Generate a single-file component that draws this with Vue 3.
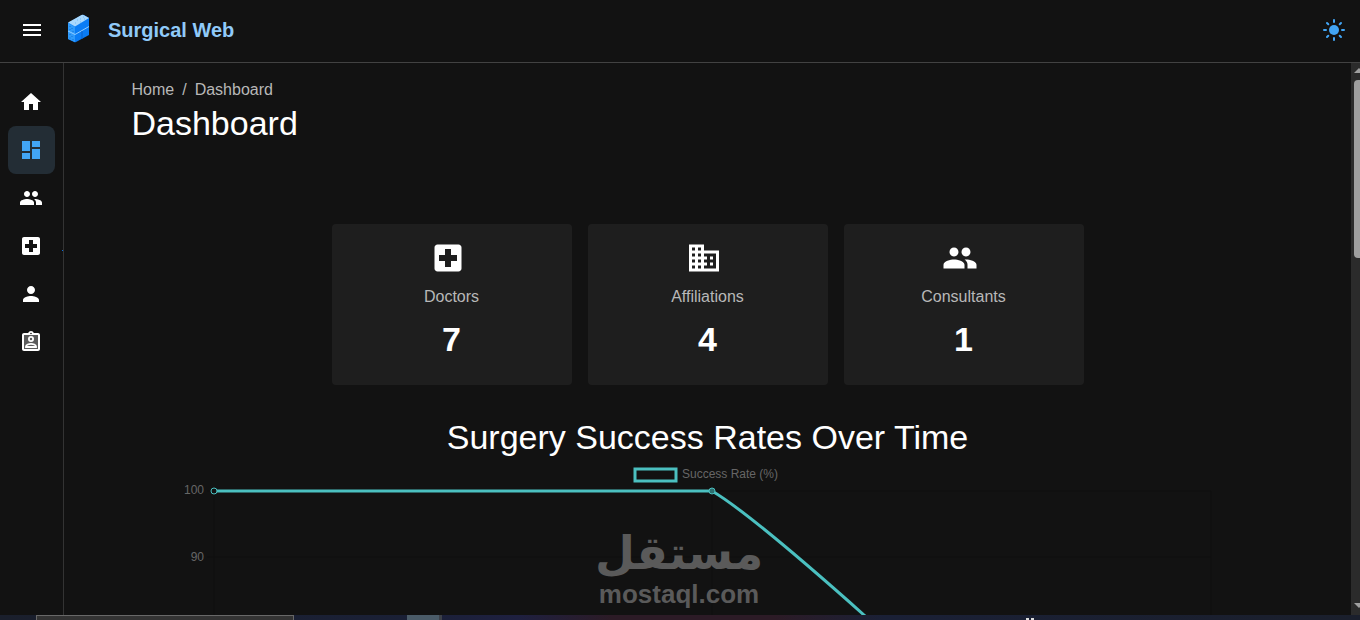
<script setup>
const paths = {
  home: 'M10 20v-6h4v6h5v-8h3L12 3 2 12h3v8z',
  dashboard: 'M3 13h8V3H3v10zm0 8h8v-6H3v6zm10 0h8V11h-8v10zm0-18v6h8V3h-8z',
  people: 'M16 11c1.66 0 2.99-1.34 2.99-3S17.66 5 16 5s-3 1.34-3 3 1.34 3 3 3zm-8 0c1.66 0 2.99-1.34 2.99-3S9.66 5 8 5 5 6.34 5 8s1.34 3 3 3zm0 2c-2.33 0-7 1.17-7 3.5V19h14v-2.5c0-2.33-4.67-3.5-7-3.5zm8 0c-.29 0-.62.02-.97.05 1.16.84 1.97 1.97 1.97 3.45V19h6v-2.5c0-2.33-4.67-3.5-7-3.5z',
  hospital: 'M19 3H5c-1.1 0-1.99.9-1.99 2L3 19c0 1.1.9 2 2 2h14c1.1 0 2-.9 2-2V5c0-1.1-.9-2-2-2zm-1 11h-4v4h-4v-4H6v-4h4V6h4v4h4v4z',
  person: 'M12 12c2.21 0 4-1.79 4-4s-1.79-4-4-4-4 1.79-4 4 1.79 4 4 4zm0 2c-2.67 0-8 1.34-8 4v2h16v-2c0-2.66-5.33-4-8-4z',
  business: 'M12 7V3H2v18h20V7H12zM6 19H4v-2h2v2zm0-4H4v-2h2v2zm0-4H4V9h2v2zm0-4H4V5h2v2zm4 12H8v-2h2v2zm0-4H8v-2h2v2zm0-4H8V9h2v2zm0-4H8V5h2v2zm10 12h-8v-2h2v-2h-2v-2h2v-2h-2V9h8v10zm-2-8h-2v2h2v-2zm0 4h-2v2h2v-2z',
}

const nav = [
  { label: 'Home', icon: 'home' },
  { label: 'Dashboard', icon: 'dashboard', active: true },
  { label: 'Consultants', icon: 'people' },
  { label: 'Doctors', icon: 'hospital' },
  { label: 'Patients', icon: 'person' },
  { label: 'Assignments', icon: 'badge' },
]

const stats = [
  { label: 'Doctors', value: 7, icon: 'hospital' },
  { label: 'Affiliations', value: 4, icon: 'business' },
  { label: 'Consultants', value: 1, icon: 'people' },
]
</script>

<template>
  <div class="screen">
    <header class="topbar">
      <button class="icon-btn" type="button" aria-label="Toggle menu">
        <svg viewBox="0 0 24 24" width="24" height="24"><path fill="currentColor" d="M3 18h18v-2H3v2zm0-5h18v-2H3v2zm0-7v2h18V6H3z" /></svg>
      </button>
      <a class="brand" href="#">
        <svg class="logo" viewBox="0 0 24 30" width="24" height="30">
          <path d="M1 9L15 1q1-.5 2 0l5 3v17L9 28q-1 .5-2 0l-6-3z" fill="#0a7cf5" />
          <path d="M1 9l7 4v15l-7-3z" fill="#2f9bfb" />
          <path d="M1 8.500L14.500 1q1-.5 2 0L22 4 8 12.500z" fill="#a9d8fd" />
          <path d="M1 17l7 3.500L22 12.500" fill="none" stroke="#8fcbff" stroke-width="1" />
          <path d="M15 17v8" stroke="#0960c8" stroke-width="1" />
          <path d="M3 12v1M5 14v1M3 15v1M6 17v1M3 20v1M5 22v1M3 23.500v1M6 25v1" stroke="#1271d6" stroke-width="1" />
          <path d="M10 6h1M13 5h1M16 3h1M13 8h1M17 5h1M8 9h1" stroke="#6db8f7" stroke-width="1" />
        </svg>
        <span>Surgical Web</span>
      </a>
      <button class="icon-btn theme" type="button" aria-label="Toggle theme">
        <svg viewBox="0 0 24 24" width="24" height="24">
          <circle cx="12" cy="12" r="5" fill="currentColor" />
          <path d="M12 2v2M12 20v2M2 12h2M20 12h2M5 5l1.300 1.300M17.700 17.700L19 19M5 19l1.300-1.300M17.700 6.300L19 5" fill="none" stroke="currentColor" stroke-width="2" stroke-linecap="round" />
        </svg>
      </button>
    </header>

    <div class="body">
      <nav class="sidebar" aria-label="Main">
        <a v-for="item in nav" :key="item.label" href="#" class="nav-item" :class="{ active: item.active }" :aria-label="item.label">
          <svg viewBox="0 0 24 24" width="24" height="24">
            <g v-if="item.icon === 'badge'">
              <path d="M5 5h14v14H5z" fill="#5b5b5b" />
              <path fill="currentColor" fill-rule="evenodd" d="M19 3h-4.200C14.400 1.800 13.300 1 12 1s-2.400.8-2.800 2H5c-1.100 0-2 .9-2 2v14c0 1.100.9 2 2 2h14c1.100 0 2-.9 2-2V5c0-1.100-.9-2-2-2zm-7-.3a.8.8 0 1 1 0 1.600.8.8 0 0 1 0-1.600zM19 19H5V5h14z" />
              <circle cx="12" cy="9" r="2.100" fill="none" stroke="currentColor" stroke-width="1.800" />
              <path d="M7 16.500c0-1.700 3-2.700 5-2.700s5 1 5 2.700V17H7z" fill="none" stroke="currentColor" stroke-width="1.800" />
            </g>
            <path v-else fill="currentColor" :d="paths[item.icon]" />
          </svg>
        </a>
        <i class="tick"></i>
      </nav>

      <main class="main">
        <div class="container">
          <nav class="crumbs" aria-label="Breadcrumb">
            <a href="#">Home</a><span>/</span><a href="#">Dashboard</a>
          </nav>
          <h1>Dashboard</h1>

          <section class="cards">
            <article v-for="s in stats" :key="s.label" class="card">
              <svg viewBox="0 0 24 24" width="36" height="36"><path fill="currentColor" :d="paths[s.icon]" /></svg>
              <p class="label">{{ s.label }}</p>
              <p class="value">{{ s.value }}</p>
            </article>
          </section>

          <h2>Surgery Success Rates Over Time</h2>
          <svg class="chart" viewBox="0 0 1152 240" role="img" aria-label="Success rate over time">
            <path d="M75 33H1079M75 99H1079M82 33V240M580 33V240M1079 33V240" stroke="#0e0e0e" fill="none" />
            <rect x="503" y="11" width="41" height="12" fill="none" stroke="#4bc0c0" stroke-width="3" />
            <g class="axis">
              <text x="550" y="20">Success Rate (%)</text>
              <text x="72" y="36" text-anchor="end">100</text>
              <text x="72" y="103" text-anchor="end">90</text>
            </g>
            <path d="M82 33H580C609 50 659 92 732 157L825 240" fill="none" stroke="#4bc0c0" stroke-width="3" />
            <g stroke="#4bc0c0">
              <circle cx="82" cy="33" r="3" fill="#121212" />
              <circle cx="580" cy="33" r="3" fill="#2d7070" />
            </g>
          </svg>
        </div>
      </main>

      <div class="scrollbar" aria-hidden="true">
        <i class="arrow up"></i>
        <i class="thumb"></i>
        <i class="arrow down"></i>
      </div>
    </div>

    <footer class="taskbar">
      <i class="search"></i>
      <i class="app"></i>
      <i class="pointer"></i>
    </footer>

    <div class="watermark">
      <span class="ar" lang="ar" dir="rtl">مستقل</span>
      <span class="en">mostaql.com</span>
    </div>
  </div>
</template>

<style>
body {
  margin: 0;
  background: #121212;
}
</style>

<style scoped>
.screen {
  position: relative;
  display: flex;
  flex-direction: column;
  height: 100vh;
  overflow: hidden;
  background: #121212;
  color: #fff;
  font-family: "Liberation Sans", Arial, sans-serif;
  font-size: 16px;
}
svg { display: block; }
h1, h2, p { margin: 0; }
a { color: inherit; text-decoration: none; }
.topbar {
  display: flex;
  align-items: center;
  flex: none;
  height: 63px;
  padding: 0 14px 2px 20px;
  box-sizing: border-box;
  border-bottom: 1px solid #424242;
}
.icon-btn {
  padding: 0;
  border: 0;
  background: none;
  color: #fff;
  cursor: pointer;
}
.theme { margin-left: auto; color: #42a5f5; }
.brand {
  display: flex;
  align-items: center;
  gap: 17px;
  margin-left: 23px;
  color: #90caf9;
  font-size: 20px;
  font-weight: 700;
  line-height: 32px;
}
.logo { margin-bottom: 3px; }
.body {
  display: flex;
  flex: 1;
  min-height: 0;
}
.sidebar {
  position: relative;
  flex: none;
  width: 47px;
  padding: 15px 8px 0;
  border-right: 1px solid #333;
}
.nav-item {
  display: flex;
  align-items: center;
  height: 48px;
  padding-left: 11px;
  border-radius: 8px;
}
.nav-item.active { background: #232d35; color: #42a5f5; }
.tick {
  position: absolute;
  right: 0;
  top: 187px;
  width: 1px;
  height: 1px;
  background: #0a6fe0;
}
.main {
  flex: 1;
  min-width: 0;
  overflow: hidden;
}
.container {
  max-width: 1152px;
  margin: 0 auto;
  padding: 15px 24px 0;
}
.crumbs {
  display: flex;
  gap: 8px;
  line-height: 24px;
  color: #b8b8b8;
}
h1, h2 {
  font-size: 34px;
  font-weight: 400;
  line-height: 42px;
}
h2 { text-align: center; }
.cards {
  display: flex;
  justify-content: center;
  gap: 16px;
  margin: 80px 0 31px;
}
.card {
  width: 240px;
  height: 161px;
  padding: 16px;
  box-sizing: border-box;
  border-radius: 4px;
  background: #1e1e1e;
  text-align: center;
}
.card svg {
  margin: 0 auto;
  padding-right: 8px;
}
.label {
  margin-top: 9px;
  line-height: 24px;
  color: #b8b8b8;
}
.value {
  margin-top: 9px;
  font-size: 34px;
  font-weight: 700;
  line-height: 42px;
}
.chart { width: 100%; }
.axis { fill: #666; font-size: 12px; }
.scrollbar {
  display: flex;
  flex-direction: column;
  flex: none;
  width: 9px;
  overflow: hidden;
  background: #2b2b2b;
}
.arrow {
  width: 0;
  margin-left: 3px;
  border: 5px solid transparent;
}
.up { border-top: 0; border-bottom-color: #a0a0a0; margin-top: 5px; }
.down { border-bottom: 0; border-top-color: #a0a0a0; margin-top: auto; margin-bottom: 7px; }
.thumb {
  width: 12px;
  height: 178px;
  margin: 7px 0 0 3px;
  border-radius: 4px;
  background: #9f9f9f;
}
.taskbar {
  display: flex;
  flex: none;
  height: 5px;
  background: linear-gradient(90deg, #1a1f2c, #1a2036 30%, #1e2040 38%, #2c1b26 45%, #2c1b26 57%, #1a2036 65%, #1a1f2c);
}
.search {
  width: 256px;
  margin-left: 36px;
  border: 1px solid #686868;
  border-bottom: 0;
  background: #333;
}
.app {
  width: 32px;
  margin-left: 113px;
  border-right: 3px solid #3c4048;
  background: #4a5b68;
}
.pointer {
  width: 2px;
  height: 2px;
  margin: 3px 326px 0 auto;
  border: 3px dotted #ddd;
  border-width: 0 3px;
}
.watermark {
  position: absolute;
  left: 50%;
  bottom: 12px;
  display: flex;
  flex-direction: column;
  align-items: center;
  width: 162px;
  margin-left: -82px;
  color: #5a5a5a;
  font-weight: 700;
}
.ar {
  font-family: "DejaVu Sans", sans-serif;
  font-size: 46px;
  line-height: 54px;
}
.en { font-size: 26px; line-height: 28px; }
</style>
